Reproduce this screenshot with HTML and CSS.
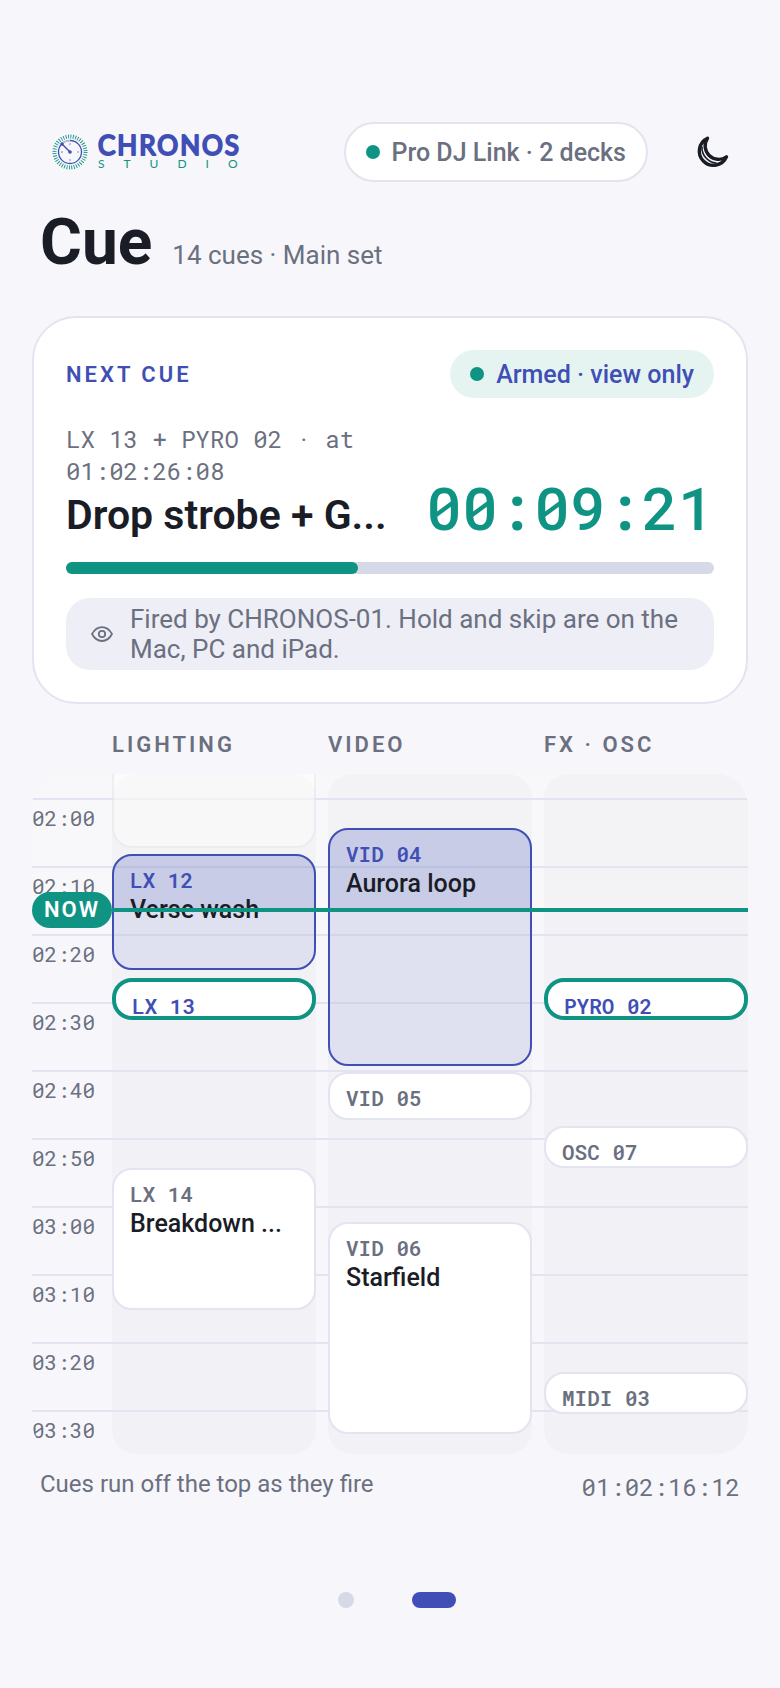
FILE: index.html
```html
<!DOCTYPE html>
<html lang="en">

<head>
    <meta charset="UTF-8">
    <meta name="viewport" content="width=device-width, initial-scale=1">
    <title>Chronos Studio - Cue</title>
    <link rel="stylesheet" href="styles.css">
</head>

<body>
    <div class="screen">
        <header class="topbar">
            <div class="logo">
                <svg class="logo_dial" viewBox="0 0 36 36" width="36" height="36" fill="none" aria-hidden="true">
                    <circle cx="18" cy="18" r="15.5" stroke="#0f9484" stroke-width="4" stroke-dasharray="0.9 1.535" />
                    <circle cx="18" cy="18" r="11.5" stroke="#3f4fb5" stroke-width="1.3" />
                    <path d="M10.500 9.300A11.500 11.500 0 0 1 18 6.500" stroke="#c4c9e8" stroke-width="1.5" />
                    <path d="M18 9v2M18 25v2M9 18h2M25 18h2" stroke="#b9bfe2" stroke-width="1.8" />
                    <path d="M18 18L10 10" stroke="#3f4fb5" stroke-width="1.4" stroke-linecap="round" />
                    <circle cx="18" cy="18" r="1.8" fill="#3f4fb5" />
                    <circle cx="10" cy="10" r="1.7" fill="#3f4fb5" />
                </svg>
                <svg class="logo_text" viewBox="0 0 150 36" width="150" height="36">
                    <text class="logo_name" x="1" y="21">CHRONOS</text>
                    <text class="logo_sub" x="1" y="34">STUDIO</text>
                </svg>
            </div>
            <div class="link_status"><i class="dot"></i>Pro DJ Link · 2 decks</div>
            <button type="button" class="theme_btn" aria-label="Dark mode">
                <svg viewBox="0 0 36 36" width="36" height="36" fill="none" stroke="#1a1c26" stroke-width="3.4" stroke-linecap="round" stroke-linejoin="round">
                    <path d="M13.500 4.200A14.200 14.200 0 1 0 32.500 22.800A13.500 13.500 0 0 1 13.500 4.200Z" />
                    <path d="M8 13C7.500 21 14 28.500 22 29" stroke-width="1.6" />
                </svg>
            </button>
        </header>

        <div class="heading">
            <h1>Cue</h1>
            <p>14 cues · Main set</p>
        </div>

        <section class="card">
            <div class="card_top">
                <h2>NEXT CUE</h2>
                <span class="armed"><i class="dot"></i>Armed · view only</span>
            </div>
            <div class="next">
                <div class="next_info">
                    <p class="next_code">LX 13 + PYRO 02 · at 01:02:26:08</p>
                    <p class="next_name">Drop strobe + G...</p>
                </div>
                <div class="countdown">00:09:21</div>
            </div>
            <div class="bar">
                <div class="bar_fill" style="width: 45%"></div>
            </div>
            <div class="note">
                <svg viewBox="0 0 24 24" width="24" height="24" fill="none" stroke="#6b7080" stroke-width="1.8" stroke-linejoin="round" aria-hidden="true">
                    <path d="M2 12C7 2.700 17 2.700 22 12C17 21.300 7 21.300 2 12Z" />
                    <circle cx="12" cy="12" r="3.200" />
                </svg>
                <p>Fired by CHRONOS-01. Hold and skip are on the Mac, PC and iPad.</p>
            </div>
        </section>

        <div class="lane_names">
            <span>LIGHTING</span>
            <span>VIDEO</span>
            <span>FX · OSC</span>
        </div>

        <!-- 10 seconds = 68px, lane top is 24px before 02:00 -->
        <div class="timeline">
            <div class="past"></div>
            <div class="ruler">
                <div>02:00</div>
                <div>02:10</div>
                <div>02:20</div>
                <div>02:30</div>
                <div>02:40</div>
                <div>02:50</div>
                <div>03:00</div>
                <div>03:10</div>
                <div>03:20</div>
                <div>03:30</div>
            </div>
            <div class="lanes">
                <div class="lane">
                    <div class="cue fired" style="top: -60px; height: 134px"></div>
                    <div class="cue running" style="top: 80px; height: 116px; --done: 54px">
                        <b>LX 12</b>
                        <p>Verse wash</p>
                    </div>
                    <div class="cue armed_cue" style="top: 204px; height: 42px">
                        <b>LX 13</b>
                    </div>
                    <div class="cue" style="top: 394px; height: 142px">
                        <b>LX 14</b>
                        <p>Breakdown ...</p>
                    </div>
                </div>
                <div class="lane">
                    <div class="cue running" style="top: 54px; height: 238px; --done: 80px">
                        <b>VID 04</b>
                        <p>Aurora loop</p>
                    </div>
                    <div class="cue" style="top: 298px; height: 48px">
                        <b>VID 05</b>
                    </div>
                    <div class="cue" style="top: 448px; height: 212px">
                        <b>VID 06</b>
                        <p>Starfield</p>
                    </div>
                </div>
                <div class="lane">
                    <div class="cue armed_cue" style="top: 204px; height: 42px">
                        <b>PYRO 02</b>
                    </div>
                    <div class="cue" style="top: 352px; height: 42px">
                        <b>OSC 07</b>
                    </div>
                    <div class="cue" style="top: 598px; height: 42px">
                        <b>MIDI 03</b>
                    </div>
                </div>
            </div>
            <div class="now"><span>NOW</span></div>
        </div>

        <div class="foot">
            <p>Cues run off the top as they fire</p>
            <time>01:02:16:12</time>
        </div>

        <nav class="pager">
            <button type="button" aria-label="Page 1"><i></i></button>
            <button type="button" aria-label="Page 2" class="active"><i></i></button>
        </nav>
    </div>
</body>

</html>
```
FILE: styles.css
```css
* {
    margin: 0;
    padding: 0;
    box-sizing: border-box;
}

body {
    background: #f7f6fb;
    color: #1a1c26;
    font-family: Roboto, "Liberation Sans", sans-serif;
    font-size: 24px;
}

.screen {
    padding: 122px 32px 32px;
}

.dot {
    width: 14px;
    height: 14px;
    border-radius: 50%;
    background: #0f9484;
}

/* top bar */
.topbar {
    display: flex;
    align-items: center;
    height: 60px;
    padding-left: 20px;
}

.logo {
    display: flex;
    align-items: center;
    gap: 9px;
    margin-right: auto;
}

.logo_text {
    overflow: visible;
}

.logo_name {
    fill: #3f4fb5;
    stroke: #3f4fb5;
    stroke-width: 2px;
    stroke-linejoin: round;
    font-family: Lato, sans-serif;
    font-size: 26px;
    font-weight: 400;
    letter-spacing: 2px;
}

.logo_sub {
    fill: #0f9484;
    font-family: Lato, sans-serif;
    font-size: 12px;
    letter-spacing: 19px;
}

.link_status {
    display: flex;
    align-items: center;
    gap: 12px;
    height: 60px;
    padding: 0 20px;
    border: 2px solid #e2e4ef;
    border-radius: 30px;
    background: #fff;
    color: #6b7080;
    font-size: 25px;
    font-weight: 500;
    white-space: nowrap;
}

.theme_btn {
    display: flex;
    align-items: center;
    justify-content: center;
    width: 72px;
    height: 60px;
    margin-left: 28px;
    border: 0;
    background: none;
}

/* heading */
.heading {
    display: flex;
    align-items: baseline;
    gap: 20px;
    padding: 23px 8px 35px;
}

.heading h1 {
    font-size: 64px;
    line-height: 76px;
}

.heading p {
    color: #6b7080;
    font-size: 26px;
}

/* next cue card */
.card {
    padding: 32px;
    border: 2px solid #e2e4ef;
    border-radius: 44px;
    background: #fff;
}

.card_top {
    display: flex;
    align-items: center;
    justify-content: space-between;
}

.card_top h2 {
    color: #3f4fb5;
    font-size: 22px;
    font-weight: 600;
    letter-spacing: 3px;
}

.armed {
    display: flex;
    align-items: center;
    gap: 12px;
    height: 48px;
    padding: 0 20px;
    border-radius: 24px;
    background: #e6f4f1;
    color: #3f4fb5;
    font-size: 25px;
    font-weight: 500;
}

.next {
    display: flex;
    align-items: flex-end;
    gap: 32px;
    margin-top: 25px;
}

.next_info {
    flex: 1;
    min-width: 0;
}

.next_code {
    color: #6b7080;
    font-family: "Roboto Mono", "Liberation Mono", monospace;
    font-size: 24px;
    line-height: 32px;
}

.next_name {
    padding-top: 5px;
    font-size: 41px;
    font-weight: 600;
    line-height: 46px;
    white-space: nowrap;
}

.countdown {
    color: #0f9484;
    font-family: "Roboto Mono", "Liberation Mono", monospace;
    font-size: 60px;
    font-weight: 500;
    line-height: 62px;
}

.bar {
    height: 12px;
    margin-top: 24px;
    border-radius: 6px;
    background: #d6d9e8;
}

.bar_fill {
    height: 100%;
    border-radius: 6px;
    background: #0f9484;
}

.note {
    display: flex;
    align-items: center;
    gap: 16px;
    margin-top: 24px;
    padding: 6px 24px;
    border-radius: 24px;
    background: #eeeef6;
    color: #6b7080;
    font-size: 26px;
    line-height: 30px;
}

.note svg {
    flex: none;
}

/* lanes */
.lane_names,
.lanes {
    display: grid;
    grid-template-columns: repeat(3, 1fr);
    gap: 12px;
    margin-left: 80px;
}

.lane_names {
    padding: 27px 0 15px;
    color: #6b7080;
    font-size: 22px;
    font-weight: 600;
    line-height: 28px;
    letter-spacing: 3px;
}

.timeline {
    display: grid;
    overflow: hidden;
    border-radius: 32px;
}

.ruler,
.past,
.lanes,
.now {
    grid-area: 1 / 1;
}

.ruler {
    z-index: 1;
    padding-top: 24px;
}

.ruler div {
    height: 68px;
    padding-top: 4px;
    border-top: 2px solid #e2e4ef;
    color: #6b7080;
    font-family: "Roboto Mono", "Liberation Mono", monospace;
    font-size: 21px;
    line-height: 28px;
}

.ruler div:last-child {
    height: 44px;
}

.past {
    height: 136px;
    background: rgba(250, 250, 250, 0.5);
}

.lane {
    position: relative;
    min-width: 0;
    border-radius: 24px;
    background: rgba(0, 0, 0, 0.02);
}

.cue {
    position: absolute;
    z-index: 2;
    left: 0;
    right: 0;
    overflow: hidden;
    padding: 11px 16px;
    border: 2px solid #e2e4ef;
    border-radius: 20px;
    background: #fff;
}

.cue b {
    display: block;
    color: #6b7080;
    font-family: "Roboto Mono", "Liberation Mono", monospace;
    font-size: 21px;
    font-weight: 600;
    line-height: 26px;
}

.cue p {
    font-size: 25px;
    font-weight: 500;
    line-height: 34px;
    white-space: nowrap;
}

.fired {
    opacity: 0.45;
}

.running {
    border-color: #3f4fb5;
    background: linear-gradient(rgba(63, 79, 181, 0.24) var(--done), rgba(63, 79, 181, 0.1) var(--done));
}

.armed_cue {
    border: 4px solid #0f9484;
}

.running b,
.armed_cue b {
    color: #3f4fb5;
}

.now {
    z-index: 3;
    display: flex;
    align-items: center;
    align-self: start;
    margin-top: 118px;
}

.now span {
    width: 80px;
    border-radius: 18px;
    background: #0f9484;
    color: #fff;
    font-size: 22px;
    font-weight: 600;
    line-height: 36px;
    letter-spacing: 2px;
    text-align: center;
}

.now::after {
    content: "";
    flex: 1;
    height: 4px;
    background: #0f9484;
}

/* footer */
.foot {
    display: flex;
    justify-content: space-between;
    align-items: center;
    padding: 10px 8px 0;
    color: #6b7080;
    line-height: 32px;
}

.foot time {
    padding-top: 7px;
    font-family: "Roboto Mono", "Liberation Mono", monospace;
}

.pager {
    display: flex;
    justify-content: center;
    margin-top: 61px;
}

.pager button {
    display: flex;
    align-items: center;
    justify-content: center;
    width: 88px;
    height: 72px;
    border: 0;
    background: none;
}

.pager i {
    width: 16px;
    height: 16px;
    border-radius: 8px;
    background: #d6d9e8;
}

.pager .active i {
    width: 44px;
    background: #3f4fb5;
}
```
